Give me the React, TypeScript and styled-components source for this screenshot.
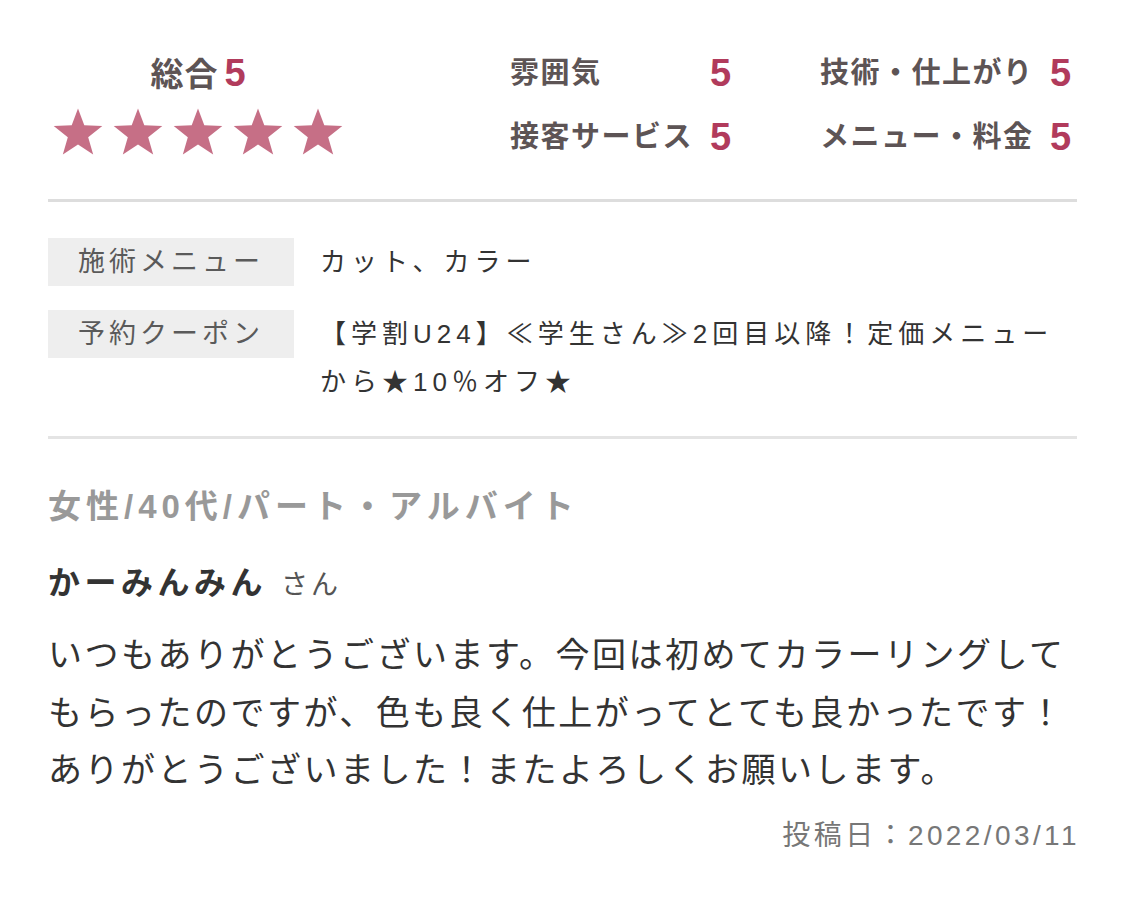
import React from "react";
import styled, { createGlobalStyle } from "styled-components";

const GlobalStyle = createGlobalStyle`
  html, body {
    margin: 0;
    padding: 0;
    background: #ffffff;
  }
  body {
    font-family: "Liberation Sans", "Noto Sans CJK JP", sans-serif;
    color: #333333;
  }
`;

const Page = styled.div`
  width: 1125px;
  box-sizing: border-box;
  padding: 51px 48px 40px 48px;
`;

const Summary = styled.section`
  display: flex;
  align-items: flex-start;
  padding-bottom: 40px;
  border-bottom: 3px solid #dddddd;
`;

const Overall = styled.div`
  width: 300px;
  display: flex;
  flex-direction: column;
  align-items: center;
  margin-top: 2px;
  margin-right: 162px;
`;

const OverallTitle = styled.div`
  display: flex;
  align-items: baseline;
  gap: 6px;
  font-size: 33px;
  font-weight: bold;
  letter-spacing: 1px;
  color: #5d5455;
  line-height: 40px;
`;

const Score = styled.span<{ $size?: number }>`
  font-family: "Liberation Sans", sans-serif;
  font-size: ${(p) => p.$size ?? 38}px;
  font-weight: bold;
  letter-spacing: 0;
  color: #b13b5c;
`;

const Stars = styled.div`
  display: flex;
  gap: 8px;
  margin-top: 12px;
`;

const RatingGrid = styled.div`
  display: grid;
  grid-template-columns: 200px 110px 230px auto;
  row-gap: 20px;
  align-items: center;
`;

const RatingLabel = styled.span`
  font-size: 29px;
  font-weight: bold;
  letter-spacing: 1.5px;
  color: #5d5455;
  line-height: 44px;
`;

const Details = styled.section`
  display: flex;
  flex-direction: column;
  gap: 24px;
  padding: 36px 0 30px;
  border-bottom: 3px solid #e4e4e4;
`;

const DetailRow = styled.div`
  display: flex;
  align-items: flex-start;
`;

const DetailLabel = styled.div`
  flex: 0 0 246px;
  height: 48px;
  background: #eeeeee;
  color: #5a5a5a;
  font-size: 27px;
  letter-spacing: 4px;
  line-height: 48px;
  text-align: center;
  margin-right: 26px;
`;

const DetailValue = styled.div`
  flex: 1;
  font-size: 26px;
  letter-spacing: 5px;
  line-height: 48px;
  color: #333333;
`;

const Review = styled.section`
  padding-top: 44px;
`;

const Profile = styled.div`
  font-size: 33px;
  font-weight: bold;
  color: #999999;
  letter-spacing: 5px;
  line-height: 48px;
`;

const Reviewer = styled.div`
  margin-top: 28px;
  display: flex;
  align-items: baseline;
  line-height: 48px;
`;

const ReviewerName = styled.span`
  font-size: 32px;
  font-weight: bold;
  letter-spacing: 4.5px;
  color: #333333;
`;

const Honorific = styled.span`
  font-size: 27px;
  letter-spacing: 3px;
  margin-left: 14px;
  color: #555555;
`;

const Body = styled.p`
  margin: 18px 0 0;
  font-size: 34px;
  letter-spacing: 2.5px;
  line-height: 57.5px;
  color: #333333;
`;

const PostedAt = styled.div`
  margin-top: 16px;
  margin-right: -3px;
  text-align: right;
  font-size: 28px;
  letter-spacing: 3.4px;
  color: #777777;
  line-height: 40px;
`;

const Star = () => (
  <svg width="52" height="50" viewBox="0 0 24 23">
    <polygon
      points="12,0.6 14.9,8.4 23.2,8.7 16.7,13.9 19,21.9 12,17.3 5,21.9 7.3,13.9 0.8,8.7 9.1,8.4"
      fill="#c66f86"
    />
  </svg>
);

const ratings = [
  ["雰囲気", "5"],
  ["技術・仕上がり", "5"],
  ["接客サービス", "5"],
  ["メニュー・料金", "5"],
];

export default function App() {
  return (
    <>
      <GlobalStyle />
      <Page>
        <Summary>
          <Overall>
            <OverallTitle>
              総合<Score $size={38}>5</Score>
            </OverallTitle>
            <Stars>
              {[0, 1, 2, 3, 4].map((i) => (
                <Star key={i} />
              ))}
            </Stars>
          </Overall>
          <RatingGrid>
            {ratings.map(([label, value]) => (
              <React.Fragment key={label}>
                <RatingLabel>{label}</RatingLabel>
                <Score>{value}</Score>
              </React.Fragment>
            ))}
          </RatingGrid>
        </Summary>

        <Details>
          <DetailRow>
            <DetailLabel>施術メニュー</DetailLabel>
            <DetailValue>カット、カラー</DetailValue>
          </DetailRow>
          <DetailRow>
            <DetailLabel>予約クーポン</DetailLabel>
            <DetailValue>
              【学割U24】≪学生さん≫2回目以降！定価メニュー
              <br />
              から★10％オフ★
            </DetailValue>
          </DetailRow>
        </Details>

        <Review>
          <Profile>女性/40代/パート・アルバイト</Profile>
          <Reviewer>
            <ReviewerName>かーみんみん</ReviewerName>
            <Honorific>さん</Honorific>
          </Reviewer>
          <Body>
            いつもありがとうございます。今回は初めてカラーリングして
            <br />
            もらったのですが、色も良く仕上がってとても良かったです！
            <br />
            ありがとうございました！またよろしくお願いします。
          </Body>
          <PostedAt>投稿日：2022/03/11</PostedAt>
        </Review>
      </Page>
    </>
  );
}
